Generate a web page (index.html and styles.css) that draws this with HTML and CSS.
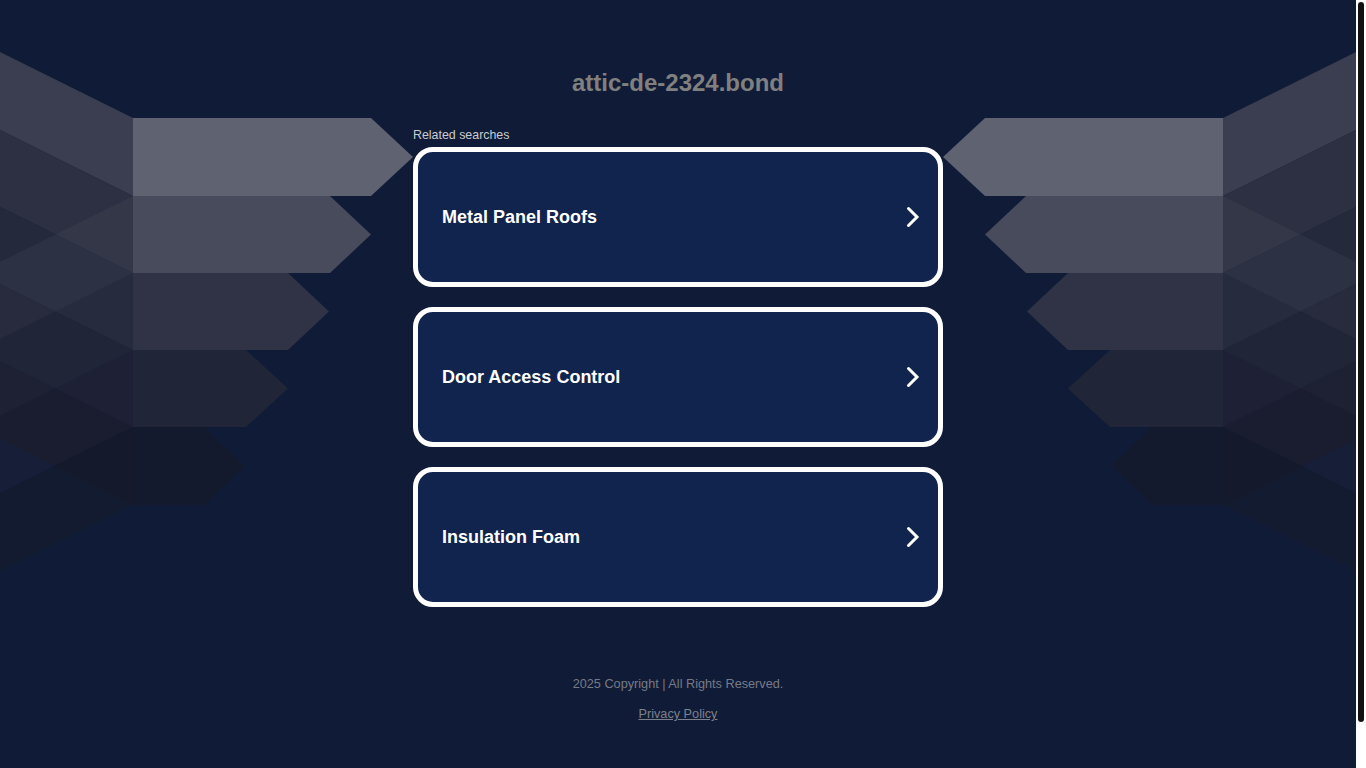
FILE: index.html
```html
<!DOCTYPE html>
<html lang="en">
<head>
<meta charset="utf-8">
<title>attic-de-2324.bond</title>
<link rel="stylesheet" href="styles.css">
</head>
<body>
<div class="page">
  <div class="wings" aria-hidden="true">
    <svg class="wing" width="413" height="600" viewBox="0 0 413 600">
      <g class="down">
        <polygon fill="#3a3e50" points="0,52 133,118 133,196 0,130"/>
        <polygon fill="#2c3042" points="0,130 133,196 133,273 0,207"/>
        <polygon fill="#25293c" points="0,207 133,273 133,350 0,284"/>
        <polygon fill="#1c2033" points="0,284 133,350 133,427 0,361"/>
        <polygon fill="#161a2c" points="0,361 133,427 133,505 0,439"/>
      </g>
      <g class="up">
        <polygon fill="#484b5c" fill-opacity="0.25" points="0,262 133,196 133,273 0,339"/>
        <polygon fill="#2f3345" fill-opacity="0.3" points="0,339 133,273 133,350 0,416"/>
        <polygon fill="#212538" fill-opacity="0.35" points="0,416 133,350 133,427 0,493"/>
        <polygon fill="#141a2c" fill-opacity="0.6" points="0,493 133,427 133,505 0,571"/>
      </g>
      <polygon fill="#141a2d" points="133,427 204,427 245,466 204,505 133,505"/>
      <polygon fill="#212538" points="133,350 246,350 288,388.5 246,427 133,427"/>
      <polygon fill="#2f3345" points="133,273 288,273 329,311.5 288,350 133,350"/>
      <polygon fill="#484b5c" points="133,196 330,196 371,234.5 330,273 133,273"/>
      <polygon fill="#5f6271" points="133,118 371,118 413,157 371,196 133,196"/>
    </svg>
    <svg class="wing wing-right" width="413" height="600" viewBox="0 0 413 600">
      <g class="down">
        <polygon fill="#3a3e50" points="0,52 133,118 133,196 0,130"/>
        <polygon fill="#2c3042" points="0,130 133,196 133,273 0,207"/>
        <polygon fill="#25293c" points="0,207 133,273 133,350 0,284"/>
        <polygon fill="#1c2033" points="0,284 133,350 133,427 0,361"/>
        <polygon fill="#161a2c" points="0,361 133,427 133,505 0,439"/>
      </g>
      <g class="up">
        <polygon fill="#484b5c" fill-opacity="0.25" points="0,262 133,196 133,273 0,339"/>
        <polygon fill="#2f3345" fill-opacity="0.3" points="0,339 133,273 133,350 0,416"/>
        <polygon fill="#212538" fill-opacity="0.35" points="0,416 133,350 133,427 0,493"/>
        <polygon fill="#141a2c" fill-opacity="0.6" points="0,493 133,427 133,505 0,571"/>
      </g>
      <polygon fill="#141a2d" points="133,427 204,427 245,466 204,505 133,505"/>
      <polygon fill="#212538" points="133,350 246,350 288,388.5 246,427 133,427"/>
      <polygon fill="#2f3345" points="133,273 288,273 329,311.5 288,350 133,350"/>
      <polygon fill="#484b5c" points="133,196 330,196 371,234.5 330,273 133,273"/>
      <polygon fill="#5f6271" points="133,118 371,118 413,157 371,196 133,196"/>
    </svg>
  </div>

  <main class="content">
    <h1 class="domain">attic-de-2324.bond</h1>
    <div class="related">Related searches</div>
    <ul class="links">
      <li>
        <a class="card" href="#">
          <span class="card-label">Metal Panel Roofs</span>
          <svg class="chevron" width="14" height="22" viewBox="0 0 14 22"><path d="M2.5 2.5 L11 11 L2.5 19.5"/></svg>
        </a>
      </li>
      <li>
        <a class="card" href="#">
          <span class="card-label">Door Access Control</span>
          <svg class="chevron" width="14" height="22" viewBox="0 0 14 22"><path d="M2.5 2.5 L11 11 L2.5 19.5"/></svg>
        </a>
      </li>
      <li>
        <a class="card" href="#">
          <span class="card-label">Insulation Foam</span>
          <svg class="chevron" width="14" height="22" viewBox="0 0 14 22"><path d="M2.5 2.5 L11 11 L2.5 19.5"/></svg>
        </a>
      </li>
    </ul>
  </main>

  <footer class="footer">
    <p class="copyright">2025 Copyright | All Rights Reserved.</p>
    <a class="privacy" href="#">Privacy Policy</a>
  </footer>
</div>
<div class="scrollbar" aria-hidden="true"><div class="scrollbar-thumb"></div></div>
</body>
</html>
```

FILE: styles.css
```css
html {
  background: #101c37;
}

body {
  margin: 0;
  background: #101c37;
  font-family: "Liberation Sans", Arial, sans-serif;
  overflow: hidden;
}

.page {
  position: relative;
  width: calc(100% - 10px);
  min-height: 768px;
  display: flex;
  flex-direction: column;
  align-items: center;
}

.wings {
  position: absolute;
  top: 0;
  left: 0;
  right: 0;
  height: 600px;
  display: flex;
  justify-content: space-between;
  pointer-events: none;
  z-index: 0;
}

.wing {
  display: block;
}

.wing-right {
  transform: scaleX(-1);
}

.content {
  position: relative;
  z-index: 1;
  width: 530px;
  padding-top: 68px;
}

.domain {
  margin: 0;
  text-align: center;
  font-size: 24px;
  line-height: 30px;
  font-weight: bold;
  color: #808080;
}

.related {
  margin-top: 30px;
  font-size: 12.4px;
  line-height: 14px;
  color: #c9cbd0;
}

.links {
  list-style: none;
  margin: 5px 0 0;
  padding: 0;
  display: flex;
  flex-direction: column;
  gap: 20px;
}

.card {
  box-sizing: border-box;
  height: 140px;
  display: flex;
  align-items: center;
  justify-content: space-between;
  padding: 0 18px 0 24px;
  border: 5px solid #ffffff;
  border-radius: 20px;
  background: #11244d;
  text-decoration: none;
}

.card-label {
  font-size: 18px;
  font-weight: bold;
  color: #ffffff;
}

.chevron {
  display: block;
}

.chevron path {
  fill: none;
  stroke: #ffffff;
  stroke-width: 3;
  stroke-linecap: round;
  stroke-linejoin: miter;
}

.footer {
  position: relative;
  z-index: 1;
  margin-top: 69px;
  display: flex;
  flex-direction: column;
  align-items: center;
  gap: 14px;
  font-size: 12.7px;
  line-height: 16px;
  color: #767a86;
}

.copyright {
  margin: 0;
}

.privacy {
  color: #7c808c;
  text-decoration: underline;
}

.scrollbar {
  position: fixed;
  top: 0;
  right: 0;
  width: 10px;
  height: 100%;
  background: #ffffff;
}

.scrollbar-thumb {
  margin: 2px 0 0 2px;
  width: 6px;
  height: 720px;
  background: #121212;
  border-radius: 3px;
}
```
